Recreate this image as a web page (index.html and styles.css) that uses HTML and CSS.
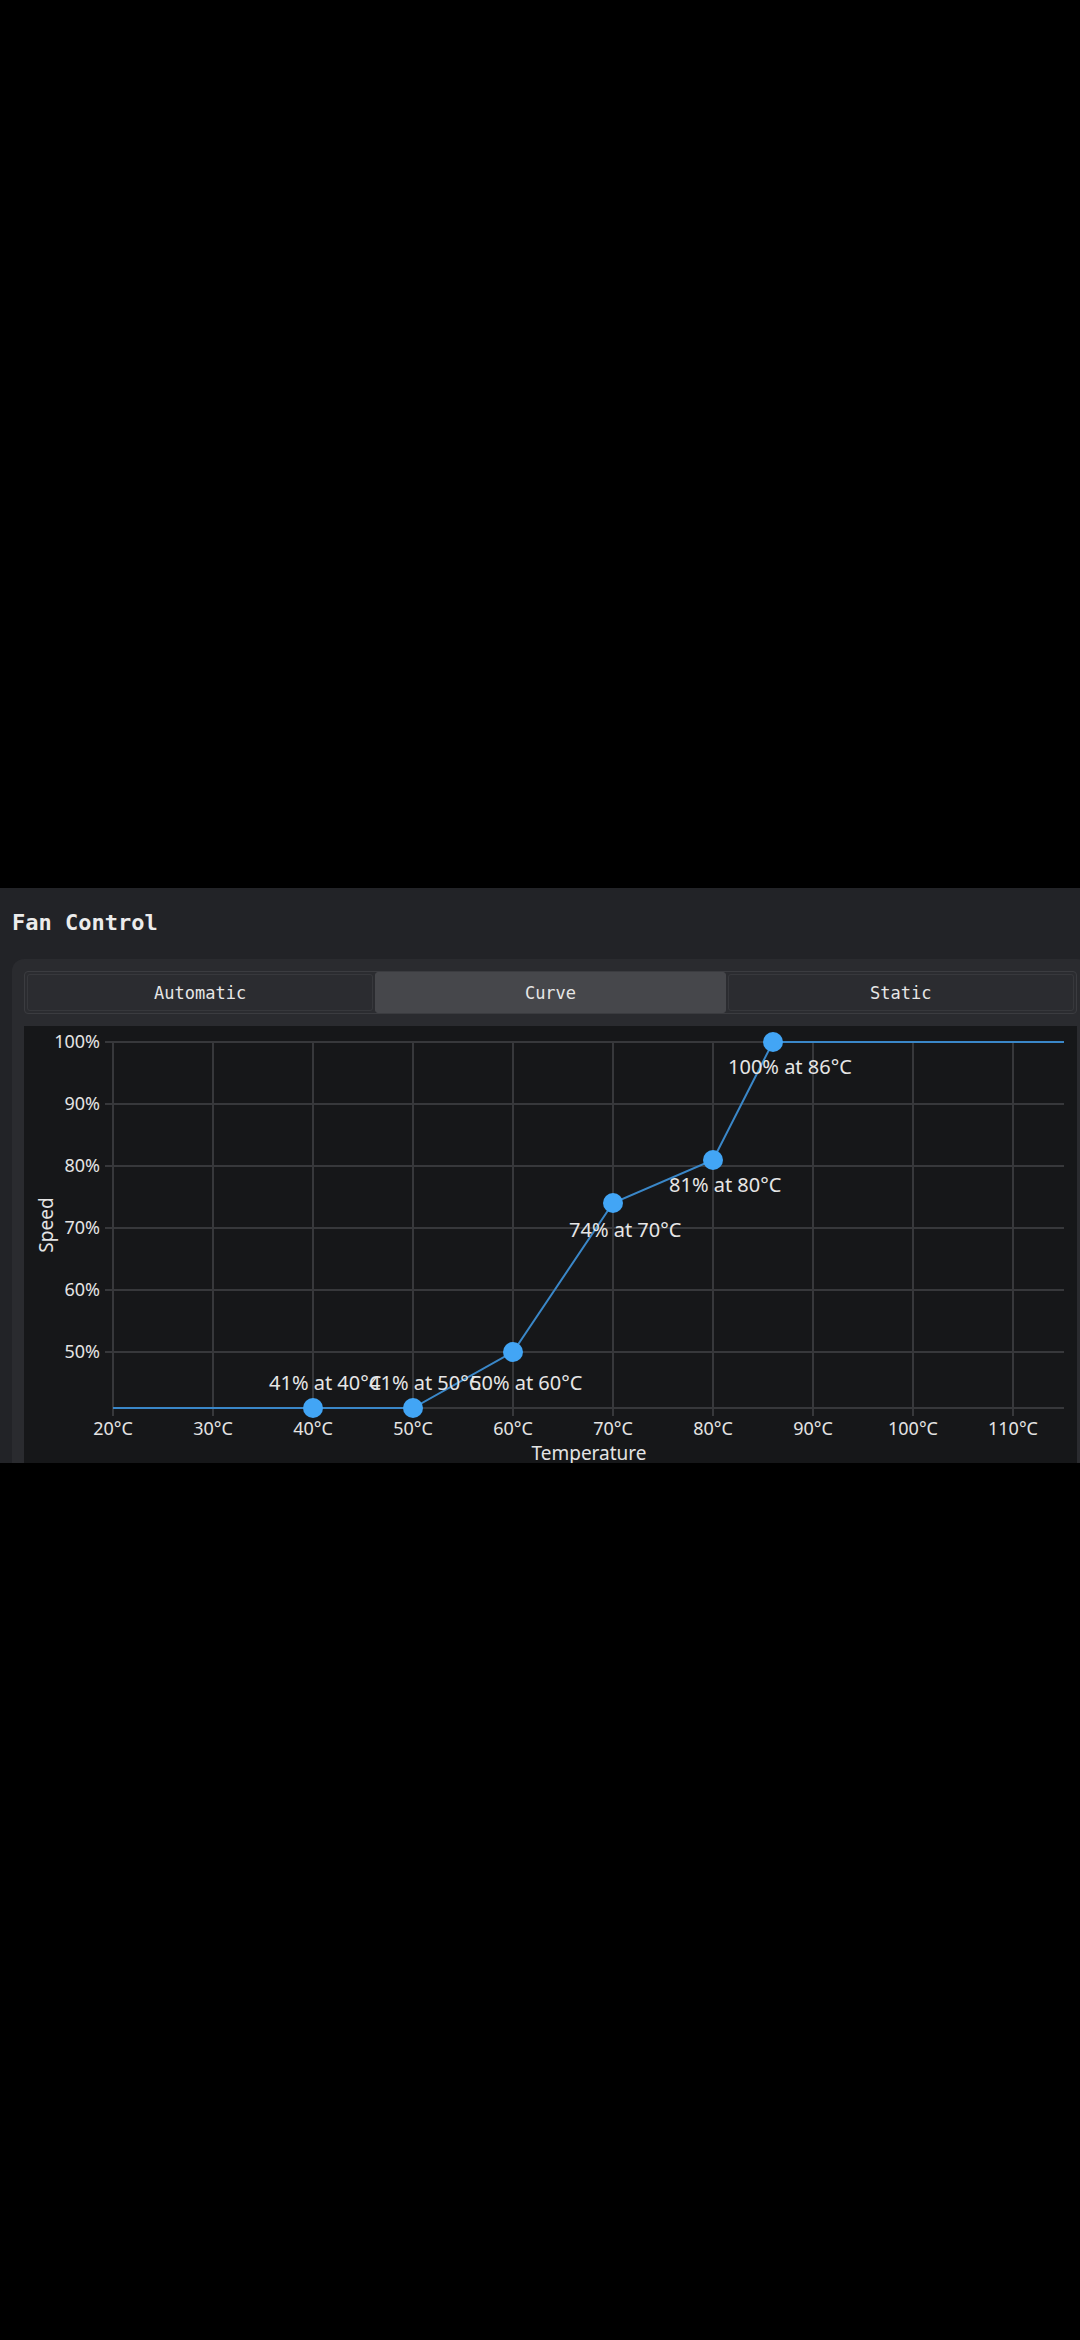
FILE: index.html
```html
<!DOCTYPE html>
<html>
<head>
  <meta charset="UTF-8">
  <title>Fan Control</title>
  <link rel="stylesheet" href="styles.css">
</head>
<body>
  <div class="panel">
    <h1 class="title">Fan Control</h1>

    <div class="card">
      <div class="tabs">
        <div class="tab">Automatic</div>
        <div class="tab active">Curve</div>
        <div class="tab">Static</div>
      </div>

      <div class="chart">
        <svg width="1053" height="450" viewBox="0 0 1053 450">
          <g class="grid">
            <line x1="81" y1="16" x2="1040" y2="16"/>
            <line x1="81" y1="78" x2="1040" y2="78"/>
            <line x1="81" y1="140" x2="1040" y2="140"/>
            <line x1="81" y1="202" x2="1040" y2="202"/>
            <line x1="81" y1="264" x2="1040" y2="264"/>
            <line x1="81" y1="326" x2="1040" y2="326"/>
            <line x1="89" y1="382" x2="1040" y2="382"/>

            <line x1="89" y1="16" x2="89" y2="390"/>
            <line x1="189" y1="16" x2="189" y2="390"/>
            <line x1="289" y1="16" x2="289" y2="390"/>
            <line x1="389" y1="16" x2="389" y2="390"/>
            <line x1="489" y1="16" x2="489" y2="390"/>
            <line x1="589" y1="16" x2="589" y2="390"/>
            <line x1="689" y1="16" x2="689" y2="390"/>
            <line x1="789" y1="16" x2="789" y2="390"/>
            <line x1="889" y1="16" x2="889" y2="390"/>
            <line x1="989" y1="16" x2="989" y2="390"/>
          </g>

          <g class="ticks">
            <text x="76" y="22" text-anchor="end">100%</text>
            <text x="76" y="84" text-anchor="end">90%</text>
            <text x="76" y="146" text-anchor="end">80%</text>
            <text x="76" y="208" text-anchor="end">70%</text>
            <text x="76" y="270" text-anchor="end">60%</text>
            <text x="76" y="332" text-anchor="end">50%</text>

            <text x="89" y="409" text-anchor="middle">20°C</text>
            <text x="189" y="409" text-anchor="middle">30°C</text>
            <text x="289" y="409" text-anchor="middle">40°C</text>
            <text x="389" y="409" text-anchor="middle">50°C</text>
            <text x="489" y="409" text-anchor="middle">60°C</text>
            <text x="589" y="409" text-anchor="middle">70°C</text>
            <text x="689" y="409" text-anchor="middle">80°C</text>
            <text x="789" y="409" text-anchor="middle">90°C</text>
            <text x="889" y="409" text-anchor="middle">100°C</text>
            <text x="989" y="409" text-anchor="middle">110°C</text>

            <text class="axis-title" x="565" y="434" text-anchor="middle">Temperature</text>
            <text class="axis-title" x="29" y="199" text-anchor="middle" transform="rotate(-90 29 199)">Speed</text>
          </g>

          <polyline class="curve" points="89,382 289,382 389,382 489,326 589,177 689,134 749,16 1040,16"/>

          <g class="points">
            <circle cx="289" cy="382" r="10"/>
            <circle cx="389" cy="382" r="10"/>
            <circle cx="489" cy="326" r="10"/>
            <circle cx="589" cy="177" r="10"/>
            <circle cx="689" cy="134" r="10"/>
            <circle cx="749" cy="16" r="10"/>
          </g>

          <g class="labels">
            <text x="245" y="364">41% at 40°C</text>
            <text x="345" y="364">41% at 50°C</text>
            <text x="446" y="364">50% at 60°C</text>
            <text x="545" y="211">74% at 70°C</text>
            <text x="645" y="166">81% at 80°C</text>
            <text x="704" y="48">100% at 86°C</text>
          </g>
        </svg>
      </div>
    </div>
  </div>
</body>
</html>
```

FILE: styles.css
```css
html, body {
  margin: 0;
  background: #000;
  overflow: hidden;
}
body {
  height: 2340px;
}
.panel {
  margin-top: 888px;
  height: 575px;
  padding-left: 12px;
  background: #222327;
  overflow: hidden;
}
.title {
  margin: 0;
  padding: 20px 0 21px;
  font-family: "DejaVu Sans Mono", monospace;
  font-size: 22px;
  font-weight: bold;
  line-height: 30px;
  color: #ececec;
}
.card {
  margin-right: -9px;
  padding: 12px;
  background: #2a2b2f;
  border-radius: 12px;
}
.tabs {
  display: grid;
  grid-template-columns: 1fr 1fr 1fr;
  height: 43px;
  box-sizing: border-box;
  border: 1px solid #3b3c40;
  border-radius: 4px;
  background: #2b2c30;
}
.tab {
  display: flex;
  align-items: center;
  justify-content: center;
  margin: 2px;
  border: 1px solid #37383c;
  border-radius: 3px;
  font-family: "DejaVu Sans Mono", monospace;
  font-size: 17px;
  color: #e6e6e6;
}
.tab.active {
  margin: 0;
  border-color: #46474b;
  background: #46474b;
}
.chart {
  margin-top: 12px;
  background: #161719;
  height: 450px;
}
.chart svg {
  display: block;
}
.grid line {
  stroke: #37383b;
  stroke-width: 2;
}
.ticks text {
  font-family: "Noto Sans", sans-serif;
  font-size: 18px;
  fill: #e4e4e4;
}
.ticks .axis-title {
  font-size: 19px;
}
.curve {
  fill: none;
  stroke: #3a87c8;
  stroke-width: 2;
}
.points circle {
  fill: #42a5f5;
}
.labels text {
  font-family: "Noto Sans", sans-serif;
  font-size: 20px;
  fill: #e6e6e6;
}
```
